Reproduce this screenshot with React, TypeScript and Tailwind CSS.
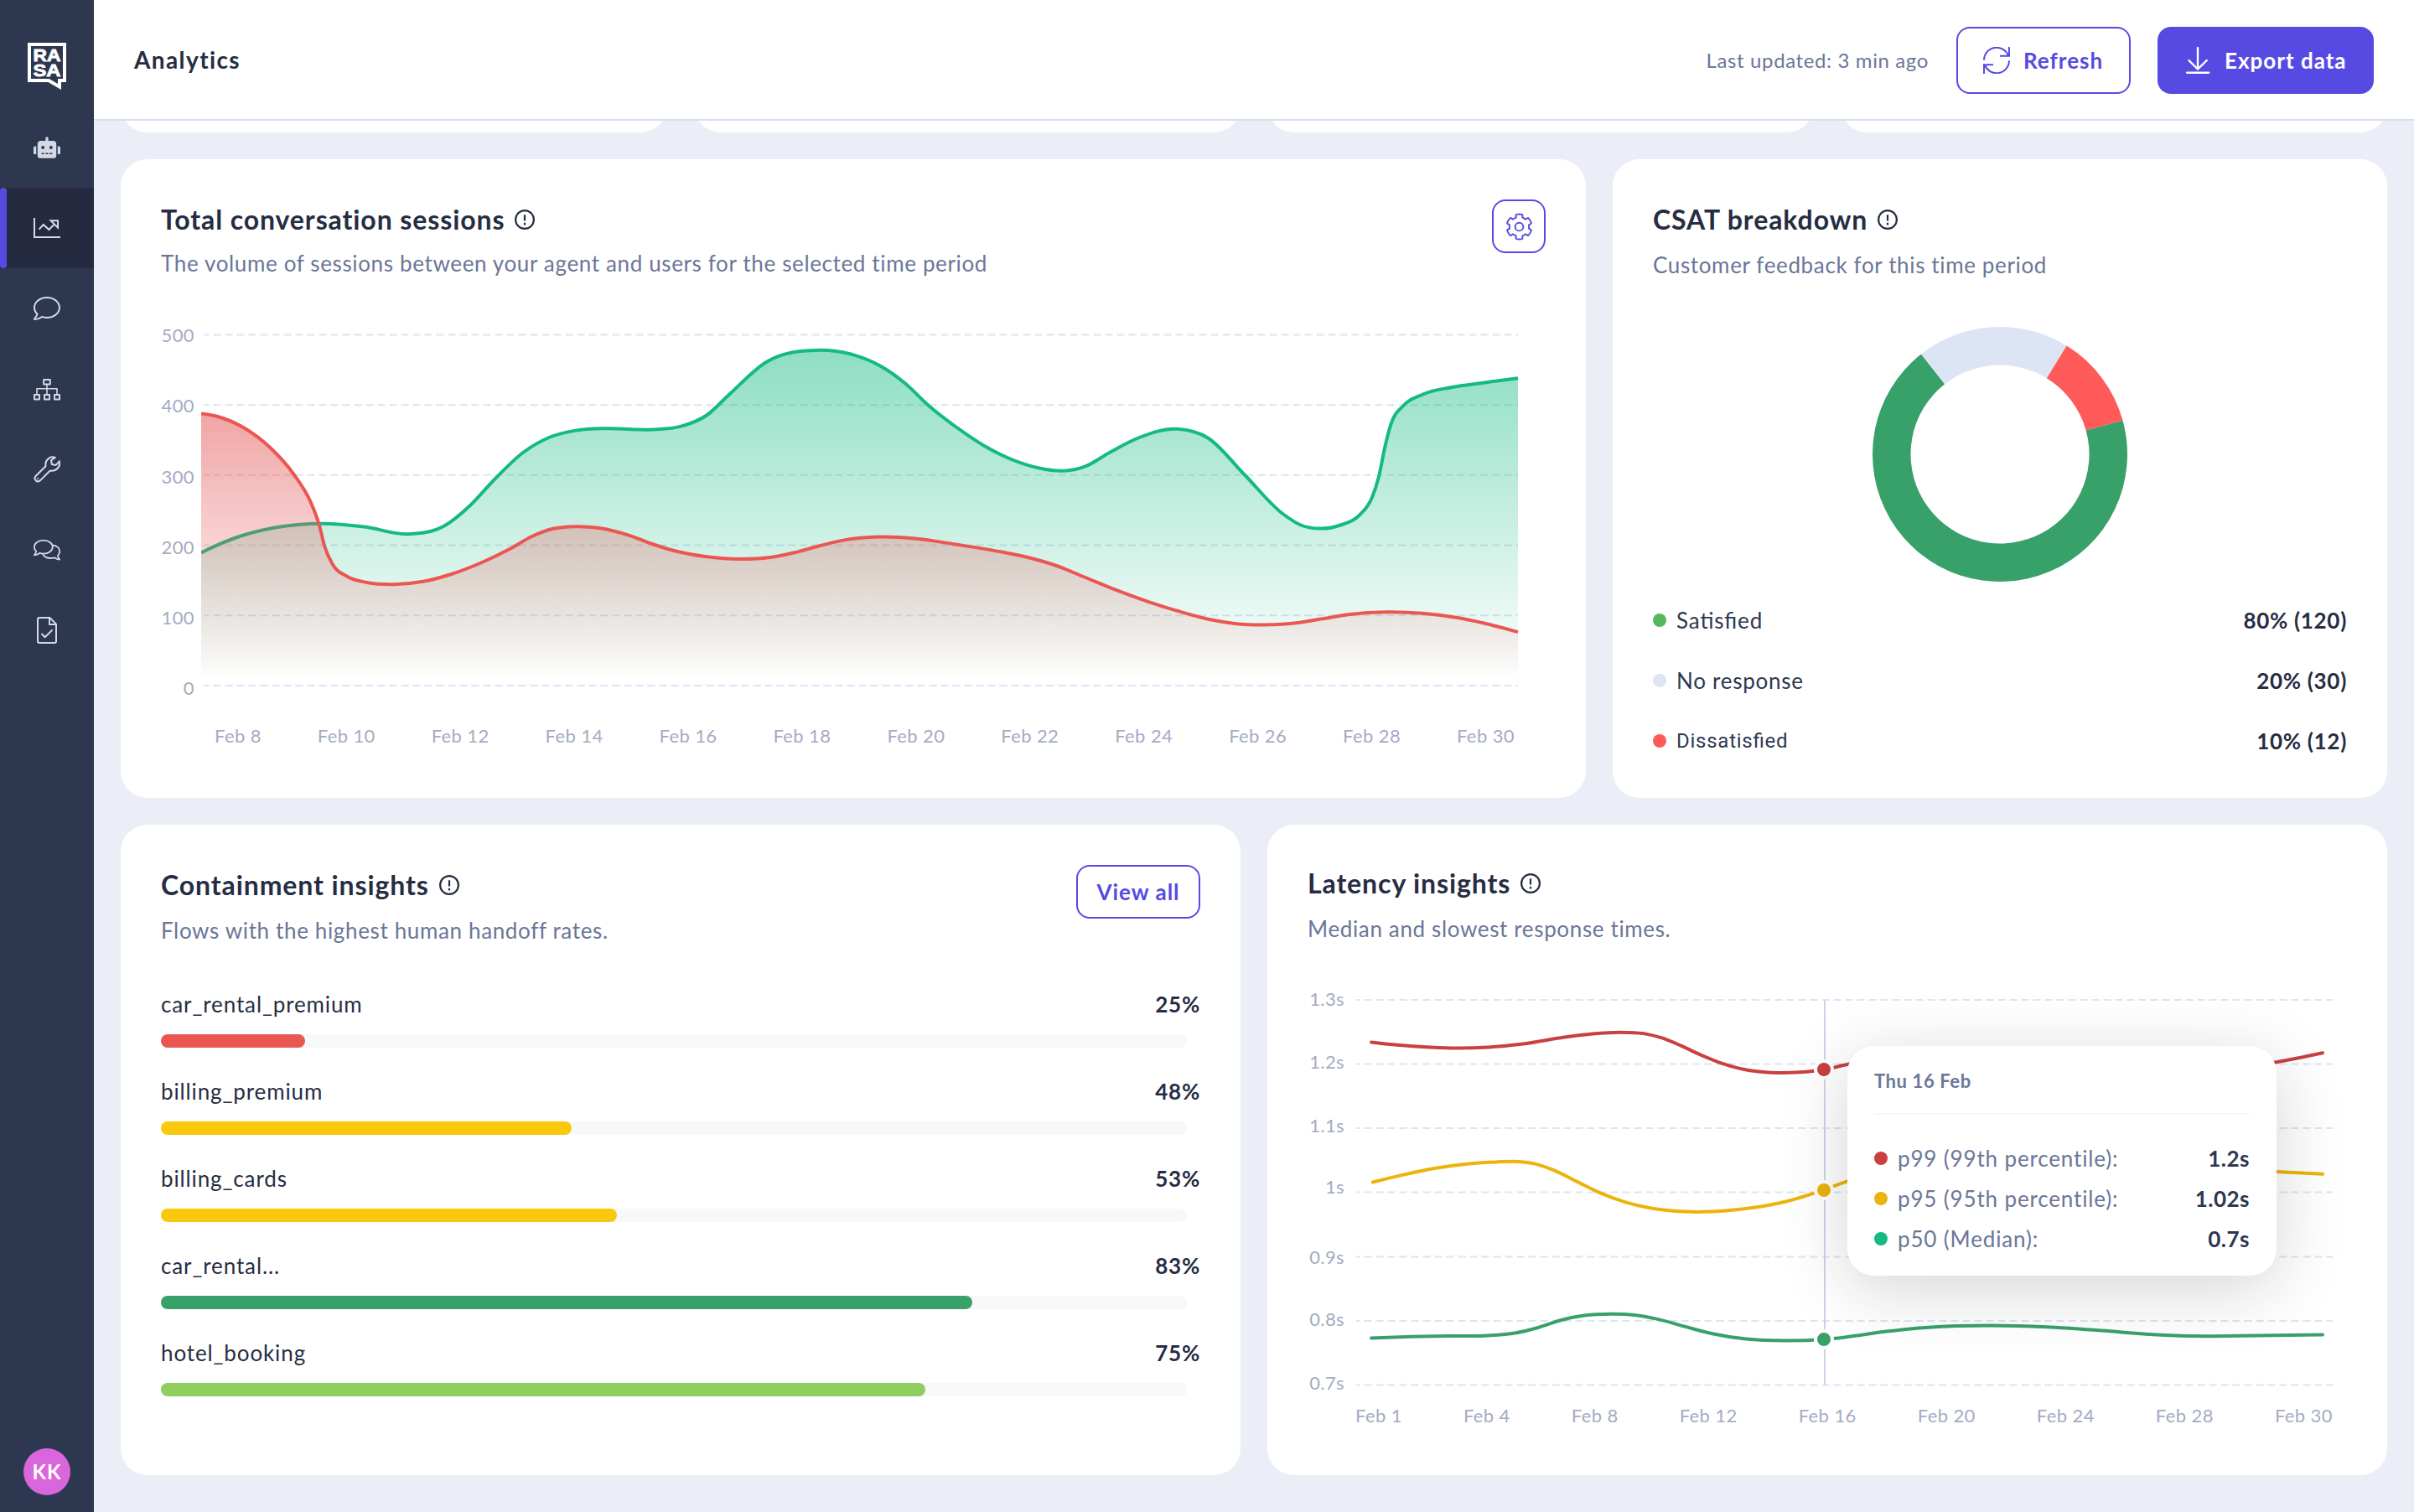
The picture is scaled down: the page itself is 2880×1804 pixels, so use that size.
import type { ReactNode } from "react";
import { FaCog, FaRobot } from "react-icons/fa";

type Point = [number, number];

const sessionDays = ["8", "10", "12", "14", "16", "18", "20", "22", "24", "26", "28", "30"];
const latencyDays = ["1", "4", "8", "12", "16", "20", "24", "28", "30"];

const handledSessions: Point[] = [
  [240, 659.6], [280, 642], [328, 629.5], [385.5, 624.8], [434.6, 628.6], [487, 637.2],
  [530, 627.5], [561, 603], [589, 573], [624, 540], [655, 522], [687, 513.6], [725, 511.2],
  [778, 512.5], [813.5, 508.4], [843, 495.5], [869.6, 471], [915, 431.5], [975, 417.9],
  [1015, 422.5], [1050, 436.5], [1080, 457.5], [1108, 484], [1140, 509], [1174.4, 532], [1209, 549],
  [1237.6, 558], [1269, 561.7], [1295, 556.3], [1323.7, 540], [1358, 522.5], [1404, 511.8],
  [1441.4, 522.7], [1484.4, 566], [1530.4, 613],
  [1552, 626.5], [1574.6, 630.6], [1599.3, 626.5], [1622.2, 614.3], [1636.6, 594.3], [1645.2, 568],
  [1652, 534.6], [1659.5, 506], [1674, 484.2], [1697, 470.7], [1731.3, 462.2], [1771.5, 456.4], [1811, 451.2],
];

const handedOffSessions: Point[] = [
  [240, 493.5], [266, 499], [294, 512.3], [322, 533.8], [350.5, 566], [371.5, 601], [381, 627],
  [387, 651], [396, 672], [413.6, 687.5], [438, 695], [470, 697.2], [505, 693.8], [540, 684.5],
  [575, 671], [610, 654], [634.6, 640], [659, 631], [686, 628.2], [715, 630], [750, 638.6],
  [778, 649], [806, 657.5], [841.5, 664], [883.6, 667], [918.7, 665], [946.7, 659.5], [975, 652],
  [1010, 643.9], [1052, 640.5], [1094, 642.8], [1140, 649.5], [1197.4, 659], [1232, 666.5], [1260.5, 675],
  [1295, 689], [1329.4, 703.2], [1369.6, 717.8], [1410, 730.4], [1444, 739.3], [1473, 743.9],
  [1507.4, 745.5], [1542, 743.8], [1576, 738.6], [1610.7, 733], [1653.8, 730.3], [1697, 731.8],
  [1737, 736.8], [1771.5, 743.8], [1811, 754.1],
];

const p99: Point[] = [
  [1636, 1243.4], [1670, 1247], [1706.6, 1249.6], [1738.8, 1250.6], [1775.5, 1249.5], [1816.8, 1245.6],
  [1860, 1238.5], [1900, 1233.4], [1941, 1231.9], [1963.8, 1233.6], [1982, 1238.2],
  [2005, 1247.4], [2028, 1258.2], [2051, 1267.6], [2078.6, 1275.5], [2119.9, 1280], [2147.5, 1279.3],
  [2176, 1276.2], [2204, 1270], [2300, 1258], [2460, 1275], [2620, 1282], [2713.4, 1267.8], [2771, 1256.2],
];

const p95: Point[] = [
  [1637.8, 1410.5], [1674.5, 1401.6], [1711.2, 1394], [1748, 1389], [1784.7, 1386.4], [1812.2, 1385.9],
  [1830.6, 1388.4], [1853.6, 1396.2], [1881, 1409.6], [1908.7, 1423.2], [1940.8, 1434.8], [1968.4, 1441.2],
  [1996, 1444.8], [2023.5, 1445.9], [2055.6, 1444.8], [2092.3, 1440.8], [2129, 1434],
  [2176, 1419.6], [2204, 1409.4], [2320, 1390], [2560, 1392], [2715.8, 1398], [2771, 1400.8],
];

const p50: Point[] = [
  [1636, 1596.4], [1683.7, 1594.8], [1729.6, 1594], [1775.5, 1593.5], [1807.6, 1590.5], [1835, 1584],
  [1862.7, 1575], [1890, 1569.6], [1922.4, 1567.8], [1950, 1569], [1977.5, 1573.9], [2009.7, 1582.6],
  [2041.8, 1591], [2083, 1597.6], [2129, 1599.6], [2176, 1598], [2201.3, 1595.4], [2248.5, 1588.8],
  [2300.5, 1583.7], [2376, 1581.6], [2442, 1583.3], [2508, 1587.6], [2564.7, 1592], [2612, 1594],
  [2673.3, 1593.8], [2771, 1592.4],
];

const flows = [
  { name: "car_rental_premium", rate: "25%", width: 172, color: "bg-[#ea5753]" },
  { name: "billing_premium", rate: "48%", width: 490, color: "bg-[#fac80d]" },
  { name: "billing_cards", rate: "53%", width: 544, color: "bg-[#fac80d]" },
  { name: "car_rental...", rate: "83%", width: 968, color: "bg-[#38a169]" },
  { name: "hotel_booking", rate: "75%", width: 912, color: "bg-[#8fce5f]" },
];

const csat = [
  { label: "Satisfied", value: "80% (120)", dot: "bg-[#55b85c]", font: "text-[26px] tracking-[0.85px]" },
  { label: "No response", value: "20% (30)", dot: "bg-[#dde4f4]", font: "text-[26px] tracking-[0.75px]" },
  { label: "Dissatisfied", value: "10% (12)", dot: "bg-[#ff5a5a]", font: "font-[Roboto] text-2xl tracking-[0.75px]" },
];

const latencyTicks = [
  { label: "1.3s", gap: "" },
  { label: "1.2s", gap: "mt-[47px]" },
  { label: "1.1s", gap: "mt-[48px]" },
  { label: "1s", gap: "mt-[45px]" },
  { label: "0.9s", gap: "mt-[56px]" },
  { label: "0.8s", gap: "mt-[46px]" },
  { label: "0.7s", gap: "mt-[48px]" },
];

const percentiles = [
  { label: "p99 (99th percentile):", value: "1.2s", dot: "bg-[#c84040]" },
  { label: "p95 (95th percentile):", value: "1.02s", dot: "bg-[#ebb30b]" },
  { label: "p50 (Median):", value: "0.7s", dot: "bg-[#14ba82]" },
];

// Cubic Hermite curve, slopes weighted by the distance to the neighbours
function smooth(points: Point[]) {
  const secant = (i: number) => (points[i + 1][1] - points[i][1]) / (points[i + 1][0] - points[i][0]);
  const last = points.length - 1;
  const slopes = points.map(([x], i) => {
    if (i === 0 || i === last) return 0;
    const before = x - points[i - 1][0];
    const after = points[i + 1][0] - x;
    return (secant(i - 1) * after + secant(i) * before) / (before + after);
  });
  slopes[0] = 2 * secant(0) - slopes[1];
  slopes[last] = 2 * secant(last - 1) - slopes[last - 1];

  let d = `M${points[0][0]} ${points[0][1]}`;
  for (let i = 0; i < last; i++) {
    const [x1, y1] = points[i];
    const [x2, y2] = points[i + 1];
    const h = (x2 - x1) / 3;
    d += `C${x1 + h} ${y1 + slopes[i] * h} ${x2 - h} ${y2 - slopes[i + 1] * h} ${x2} ${y2}`;
  }
  return d;
}

function ringSlice(from: number, to: number) {
  const at = (deg: number, r: number) => {
    const a = ((deg - 90) * Math.PI) / 180;
    return `${152 + r * Math.cos(a)} ${152 + r * Math.sin(a)}`;
  };
  const large = to - from > 180 ? 1 : 0;
  return `M${at(from, 152)}A152 152 0 ${large} 1 ${at(to, 152)}L${at(to, 106.5)}A106.5 106.5 0 ${large} 0 ${at(from, 106.5)}Z`;
}

function InfoIcon() {
  return (
    <svg viewBox="0 0 24 24" className="size-6" fill="none" stroke="#262d43" strokeWidth="2.2">
      <circle cx="12" cy="12" r="10.9" />
      <path d="M12 6.2v7.2M12 15.8v2.6" />
    </svg>
  );
}

function Card({ className, children }: { className: string; children: ReactNode }) {
  return <section className={`rounded-[32px] bg-white p-12 ${className}`}>{children}</section>;
}

function CardTitle({ title, subtitle, className }: { title: string; subtitle: string; className: string }) {
  return (
    <header className={className}>
      <div className="flex items-center gap-3">
        <h2 className="text-[32px] leading-10 font-bold tracking-[0.9px] text-[#262d43]">{title}</h2>
        <InfoIcon />
      </div>
      <p className="text-[26px] leading-8 tracking-[0.64px] text-[#6b7697]">{subtitle}</p>
    </header>
  );
}

function NavIcon({ children }: { children: ReactNode }) {
  return (
    <svg viewBox="0 0 32 32" className="size-8" fill="none" stroke="currentColor" strokeWidth="2" strokeLinejoin="round">
      {children}
    </svg>
  );
}

function Logo() {
  return (
    <svg viewBox="33 51 46 56" className="h-14 w-[46px]">
      <path d="M35 53h42v43h-6v7.5L58 96H35z" fill="none" stroke="#fff" strokeWidth="4" />
      <g fill="#fff" fontFamily="Liberation Sans" fontWeight="700" fontSize="20" stroke="#fff" strokeWidth="0.8">
        <text x="39.5" y="72.5" textLength="33" lengthAdjust="spacingAndGlyphs">RA</text>
        <text x="39.5" y="91" textLength="33" lengthAdjust="spacingAndGlyphs">SA</text>
      </g>
    </svg>
  );
}

function Sidebar() {
  const item = "flex h-24 w-full items-center justify-center";
  return (
    <aside className="flex w-28 shrink-0 flex-col items-center bg-[#2d3850] text-[#d5d9e6]">
      <div className="flex h-32 items-end pb-[21px]">
        <Logo />
      </div>
      <a className={item}>
        <FaRobot className="size-8" />
      </a>
      <a className="flex h-24 w-full items-center bg-[#262a40]">
        <span className="mr-8 h-24 w-2 rounded-full bg-[#574ae2]" />
        <NavIcon>
          <path d="M1 4v23h31M6.6 17.6l5.2-5.6 6.6 6L25 11.4M20.6 7.2h8.4v8.4z" strokeLinejoin="miter" />
        </NavIcon>
      </a>
      <a className={item}>
        <svg viewBox="0 0 512 512" className="size-8" fill="currentColor">
          <path d="M256 64c123.5 0 224 79 224 176S379.5 416 256 416c-28.3 0-56.3-4.3-83.2-12.8l-15.2-4.8-13 9.2c-23 16.3-58.5 35.3-102.6 39.6 12-15.1 29.8-40.4 40.8-69.6l7.1-18.7-13.7-14.6C47.3 313.7 32 277.6 32 240c0-97 100.5-176 224-176m0-32C114.6 32 0 125.1 0 240c0 47.6 19.9 91.2 52.9 126.3C38 405.7 7 439.1 6.5 439.5c-6.6 7-8.4 17.2-4.6 26 3.8 8.8 12.4 14.5 22 14.5 61.5 0 110-25.7 139.1-46.3 29 9.1 60.2 14.3 93 14.3 141.4 0 256-93.1 256-208S397.4 32 256 32z" />
        </svg>
      </a>
      <a className={item}>
        <NavIcon>
          <path d="M12.2 5h7.6v5.6h-7.6zM1 23h6v5.6H1zM13 23h6v5.6h-6zM25 23h6v5.6h-6z" />
          <path d="M16 10.6V23M4 23v-7.2h24V23" strokeWidth="1.6" />
        </NavIcon>
      </a>
      <a className={item}>
        <NavIcon>
          <path d="M25.8 1.9c-6-2.4-12.6 3-11.3 10.3L2.3 24.3a3.8 3.8 0 0 0 5.3 5.3l12.2-12.1c7.3 1.3 12.9-5 11.1-11.2l-4.2 4.6-4.8-.9-.9-4.8z" />
          <circle cx="5.1" cy="26.9" r="1" fill="currentColor" stroke="none" />
        </NavIcon>
      </a>
      <a className={item}>
        <NavIcon>
          <g strokeWidth="1.8">
            <path d="M11.8 4.6c6.2 0 11 3.6 11 8s-4.8 8-11 8c-1.6 0-3.2-.2-4.6-.7-1.8 1.3-4 2.2-6.4 2.4 1.2-1.2 2-2.8 2.4-4.4C1.7 16.5.9 14.6.9 12.6c0-4.4 4.7-8 10.9-8z" />
            <path d="M23 10.3c4.8.8 8.2 3.9 8.2 7.5 0 2-.8 3.8-2.3 5.3.4 1.7 1.2 3.3 2.4 4.6-2.4-.2-4.6-1-6.4-2.4-1.5.4-3 .7-4.6.7-4 0-7.5-1.9-9.4-4.8" />
          </g>
        </NavIcon>
      </a>
      <a className={item}>
        <NavIcon>
          <path d="M7 1h12.4L27 8.6V29a2 2 0 0 1-2 2H7a2 2 0 0 1-2-2V3a2 2 0 0 1 2-2zM19 1v8h8M9.6 20l4 4.2 9-8.8" />
        </NavIcon>
      </a>
      <div className="mt-auto mb-5 flex size-14 items-center justify-center rounded-full bg-[#d966dc] text-2xl font-bold tracking-[1px] text-white">
        KK
      </div>
    </aside>
  );
}

function Header() {
  return (
    <header className="flex h-36 shrink-0 items-center border-b-2 border-[#d6ddee] bg-white px-12 pt-0.5 text-[26px] tracking-[1px]">
      <h1 className="mr-auto pb-0.5 text-[28px] font-bold tracking-[1.4px] text-[#262d43]">Analytics</h1>
      <span className="mr-[33px] text-2xl tracking-[0.62px] text-[#6b7697]">Last updated: 3 min ago</span>
      <button className="mr-8 flex h-20 w-[208px] items-center gap-4 rounded-2xl border-2 border-[#574ae2] pl-[30px] font-bold text-[#574ae2]">
        <svg viewBox="0 0 32 32" className="size-8" fill="none" stroke="currentColor" strokeWidth="2">
          <path d="M1 15.8A15 15 0 0 1 30 10.4M31 0v10.8H20M31 16.2A15 15 0 0 1 2 21.6M1 32V21.2h11" />
        </svg>
        Refresh
      </button>
      <button className="flex h-20 w-[258px] items-center gap-4 rounded-2xl bg-[#574ae2] pl-8 font-bold text-white">
        <svg viewBox="0 0 32 32" className="size-8" fill="none" stroke="currentColor" strokeWidth="2.4" strokeLinecap="round">
          <path d="M16 1v25.6M5.4 16 16 26.6 26.8 16M3.2 30.8h26" />
        </svg>
        Export data
      </button>
    </header>
  );
}

function SessionsCard() {
  const green = smooth(handledSessions);
  const red = smooth(handedOffSessions);
  return (
    <Card className="w-[1748px]">
      <div className="flex items-start justify-between">
        <CardTitle
          className="flex flex-col gap-4 pt-1"
          title="Total conversation sessions"
          subtitle="The volume of sessions between your agent and users for the selected time period"
        />
        <button className="flex size-16 items-center justify-center rounded-2xl border-2 border-[#574ae2] text-[#574ae2]">
          <FaCog className="size-[31px] overflow-visible fill-none stroke-current stroke-[32]" />
        </button>
      </div>
      <div className="mt-14 flex gap-2 text-[22px] leading-7 tracking-[0.4px] text-[#a4abc3]">
        <div className="flex w-10 flex-col gap-[56.3px] text-right">
          {[500, 400, 300, 200, 100, 0].map((tick) => (
            <span key={tick}>{tick}</span>
          ))}
        </div>
        <svg viewBox="240 386 1572 448" className="h-[448px] w-[1572px]" fill="none">
          <defs>
            <linearGradient id="handled" gradientUnits="userSpaceOnUse" x1="0" y1="418" x2="0" y2="812">
              <stop stopColor="#14ba82" stopOpacity="0.48" />
              <stop offset="1" stopColor="#14ba82" stopOpacity="0" />
            </linearGradient>
            <linearGradient id="handedOff" gradientUnits="userSpaceOnUse" x1="0" y1="493" x2="0" y2="812">
              <stop stopColor="#e25252" stopOpacity="0.52" />
              <stop offset="1" stopColor="#eb5757" stopOpacity="0" />
            </linearGradient>
          </defs>
          {[399.5, 483.2, 566.8, 650.5, 734.2, 818].map((y) => (
            <path key={y} d={`M243.5 ${y}H1811`} stroke="#dde4f4" strokeWidth="2" strokeDasharray="9 5" strokeDashoffset="3" />
          ))}
          <path d={`${green}V812H240Z`} fill="url(#handled)" />
          <path d={green} stroke="#14ba82" strokeWidth="4" />
          <path d={`${red}V812H240Z`} fill="url(#handedOff)" />
          <path d={red} stroke="#ea5753" strokeWidth="4" />
        </svg>
      </div>
      <div className="mt-[29px] mr-[37px] ml-[64px] flex justify-between text-[22px] leading-7 tracking-[0.4px] text-[#a4abc3]">
        {sessionDays.map((day) => (
          <span key={day}>Feb {day}</span>
        ))}
      </div>
    </Card>
  );
}

function CsatCard() {
  return (
    <Card className="flex-1">
      <CardTitle
        className="flex flex-col gap-[18px] pt-1"
        title="CSAT breakdown"
        subtitle="Customer feedback for this time period"
      />
      <svg viewBox="0 0 304 304" className="mx-auto mt-[58px] size-[304px]">
        <path d={ringSlice(74.5, 321.8)} fill="#38a169" />
        <path d={ringSlice(321.8, 391.6)} fill="#dde4f4" />
        <path d={ringSlice(31.6, 74.5)} fill="#ff5a5a" />
      </svg>
      <ul className="mt-[30px] flex flex-col gap-10 leading-8 text-[#2d3850]">
        {csat.map((item) => (
          <li key={item.label} className="flex h-8 items-center">
            <span className={`mr-3 size-4 rounded-full ${item.dot}`} />
            <span className={`[font-feature-settings:'liga'] ${item.font}`}>{item.label}</span>
            <span className="ml-auto text-[26px] font-bold tracking-[0.7px] text-[#262d43]">{item.value}</span>
          </li>
        ))}
      </ul>
    </Card>
  );
}

function ContainmentCard() {
  return (
    <Card className="flex-1">
      <div className="flex items-start justify-between">
        <CardTitle
          className="flex flex-col gap-[18px] pt-1"
          title="Containment insights"
          subtitle="Flows with the highest human handoff rates."
        />
        <button className="h-16 w-[148px] rounded-2xl border-2 border-[#574ae2] text-[26px] font-bold tracking-[1px] text-[#574ae2]">
          View all
        </button>
      </div>
      <ul className="mt-14 flex flex-col gap-9 text-[26px] leading-8 text-[#262d43]">
        {flows.map((flow) => (
          <li key={flow.name} className="flex flex-col gap-5">
            <div className="flex justify-between">
              <span className="tracking-[0.88px]">{flow.name}</span>
              <span className="font-bold tracking-[0.8px]">{flow.rate}</span>
            </div>
            <div className="mr-4 h-4 rounded-full bg-[#f6f8fa]">
              <div className={`h-4 rounded-full ${flow.color}`} style={{ width: flow.width }} />
            </div>
          </li>
        ))}
      </ul>
    </Card>
  );
}

function LatencyTooltip() {
  return (
    <div className="absolute top-[70px] left-[644px] h-[274px] w-[512px] rounded-[32px] bg-white px-8 pt-7 shadow-[0_16px_80px_rgba(35,20,25,0.18)]">
      <p className="text-[22px] leading-7 font-bold tracking-[0.6px] text-[#6b7697]">Thu 16 Feb</p>
      <hr className="mt-6 border-t-2 border-[#f5f6f9]" />
      <ul className="mt-9 flex flex-col gap-4 text-[26px] leading-8">
        {percentiles.map((item) => (
          <li key={item.label} className="flex items-center">
            <span className={`mr-3 size-4 rounded-full ${item.dot}`} />
            <span className="tracking-[0.85px] text-[#6b7697]">{item.label}</span>
            <span className="ml-auto font-bold tracking-[0.5px] text-[#2d3850]">{item.value}</span>
          </li>
        ))}
      </ul>
    </div>
  );
}

function LatencyCard() {
  const markers = [
    { y: 1276, color: "#c84040" },
    { y: 1420, color: "#ebb30b" },
    { y: 1598, color: "#38a169" },
  ];
  return (
    <Card className="flex-1">
      <CardTitle
        className="flex flex-col gap-[18px] pt-0.5"
        title="Latency insights"
        subtitle="Median and slowest response times."
      />
      <div className="relative mt-[54px] text-[22px] leading-7 tracking-[0.4px] text-[#a4abc3]">
        <div className="flex gap-3">
          <div className="flex w-11 flex-col text-right">
            {latencyTicks.map((tick) => (
              <span key={tick.label} className={tick.gap}>{tick.label}</span>
            ))}
          </div>
          <svg viewBox="1616 1178 1168 487" className="h-[487px] w-[1168px]" fill="none" strokeLinecap="round">
            {[1193, 1269.6, 1346, 1422.6, 1499.4, 1576, 1652.6].map((y) => (
              <path key={y} d={`M1617.5 ${y}H2783`} stroke="#dde4f4" strokeWidth="2" strokeDasharray="9 5" strokeDashoffset="4" strokeLinecap="butt" />
            ))}
            <path d="M2177 1193v459" stroke="#ced3e5" strokeWidth="2" strokeLinecap="butt" />
            <path d={smooth(p99)} stroke="#c84040" strokeWidth="4" />
            <path d={smooth(p95)} stroke="#ebb30b" strokeWidth="4" />
            <path d={smooth(p50)} stroke="#38a169" strokeWidth="4" />
            {markers.map((m) => (
              <circle key={m.y} cx="2176" cy={m.y} r="10" fill={m.color} stroke="#fff" strokeWidth="4" />
            ))}
          </svg>
        </div>
        <div className="mt-2.5 mr-[17px] ml-[57px] flex justify-between">
          {latencyDays.map((day) => (
            <span key={day}>Feb {day}</span>
          ))}
        </div>
        <LatencyTooltip />
      </div>
    </Card>
  );
}

export default function App() {
  return (
    <div className="flex h-[1804px] w-[2880px] overflow-hidden bg-[#ebeef7] font-[Lato,sans-serif]">
      <Sidebar />
      <div className="flex flex-1 flex-col">
        <Header />
        <main className="flex flex-col gap-8 px-8">
          <div className="flex h-3.5 items-end gap-8 overflow-hidden">
            <div className="h-20 flex-1 rounded-[32px] bg-white" />
            <div className="h-20 flex-1 rounded-[32px] bg-white" />
            <div className="h-20 flex-1 rounded-[32px] bg-white" />
            <div className="h-20 flex-1 rounded-[32px] bg-white" />
          </div>
          <div className="flex h-[762px] gap-8">
            <SessionsCard />
            <CsatCard />
          </div>
          <div className="flex h-[776px] gap-8">
            <ContainmentCard />
            <LatencyCard />
          </div>
        </main>
      </div>
    </div>
  );
}
